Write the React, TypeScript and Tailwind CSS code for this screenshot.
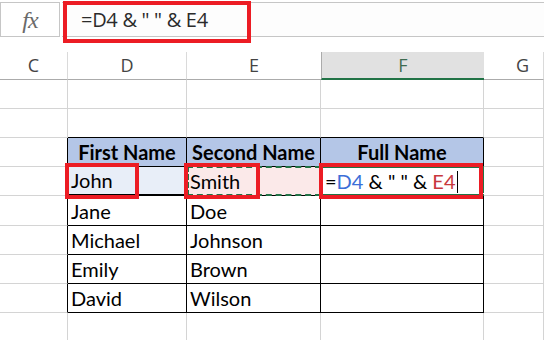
import React from "react";

const cols = [
  { id: "C", w: 68 },
  { id: "D", w: 119 },
  { id: "E", w: 134 },
  { id: "F", w: 163 },
  { id: "G", w: 60 },
];

// row index 0..8 ; table covers rows 2..7, cols 1..3
const rowHeights = [29, 29, 29, 29, 30, 29, 29, 29, 29];

const data: (string | null)[][] = [
  [null, null, null],
  [null, null, null],
  ["First Name", "Second Name", "Full Name"],
  ["John", "Smith", null],
  ["Jane", "Doe", null],
  ["Michael", "Johnson", null],
  ["Emily", "Brown", null],
  ["David", "Wilson", null],
  [null, null, null],
];

const inTable = (r: number) => r >= 2 && r <= 7;

const Cell: React.FC<{ r: number; c: number }> = ({ r, c }) => {
  const tableCol = c >= 1 && c <= 3;
  const rightBlack = inTable(r) && c <= 3;
  const bottomBlack = tableCol && r >= 1 && r <= 7;
  const header = r === 2 && tableCol;
  const value = tableCol ? data[r][c - 1] : null;

  let bg = "bg-white";
  if (header) bg = "bg-[#b4c6e7]";
  else if (r === 3 && c === 1) bg = "bg-[#e8eef8]";
  else if (r === 3 && c === 2) bg = "bg-[#fbe9e9]";

  return (
    <div
      className={`relative flex items-end border-r border-b ${bg} ${
        rightBlack ? "border-r-black" : "border-r-[#d4d4d4]"
      } ${bottomBlack ? "border-b-black" : "border-b-[#d4d4d4]"} ${
        header ? "justify-center font-bold" : "pl-[3px]"
      } ${r === 3 && c === 1 ? "border-b-[#4472c4] border-b-2" : ""}`}
      style={{ width: cols[c].w, height: rowHeights[r] }}
    >
      {value && <span className="leading-none pb-[4px]">{value}</span>}
      {r === 3 && c === 2 && (
        <div className="absolute left-0 right-[-1px] top-[-1px] bottom-[-1px] border-2 border-dashed border-[#217346]" />
      )}
      {r === 3 && c === 3 && (
        <>
          <div className="absolute left-[-1px] right-[-1px] top-[-1px] bottom-[-1px] border-2 border-[#217346]" />
          <div className="absolute right-[-4px] bottom-[-4px] w-[6px] h-[6px] bg-[#217346] border border-white" />
          <span className="leading-none pb-[4px] pl-[1px] flex items-end">
            <span className="text-black">=</span>
            <span className="text-[#3c6fd8]">D4</span>
            <span className="text-black whitespace-pre"> &amp; " " &amp; </span>
            <span className="text-[#c8383d]">E4</span>
            <span className="inline-block w-[1px] h-[22px] bg-black ml-[2px] mb-[-2px]" />
          </span>
        </>
      )}
    </div>
  );
};

const RedBox: React.FC<{ className: string }> = ({ className }) => (
  <div className={`absolute border-[4px] border-[#ec1c24] pointer-events-none ${className}`} />
);

export default function App() {
  return (
    <div
      className="relative w-[544px] h-[340px] overflow-hidden bg-white text-[20px] text-black"
      style={{ fontFamily: "Lato, 'Liberation Sans', sans-serif" }}
    >
      {/* Formula bar */}
      <div className="flex h-[37px] pt-[2px] gap-[2px]">
        <div className="w-[60px] border border-[#c6c6c6] bg-white flex items-center justify-center">
          <span
            className="italic text-[24px] text-[#6a6a6a] tracking-[-1px]"
            style={{ fontFamily: "'Liberation Serif', serif" }}
          >
            fx
          </span>
        </div>
        <div
          className="flex-1 border-y border-[#c6c6c6] bg-[#fdfdfd] flex items-center pl-[19px] text-[20px] text-[#2b2b2b]"
          style={{ fontFamily: "'Open Sans', sans-serif" }}
        >
          <span className="whitespace-pre tracking-[-0.3px]">=D4 &amp; " " &amp; E4</span>
        </div>
      </div>

      {/* Column headers */}
      <div className="flex mt-[15px] h-[28px]">
        {cols.map((col) => (
          <div
            key={col.id}
            className={`flex items-center justify-center border-b text-[18px] ${
              col.id === "F"
                ? "bg-[#e1e1e1] border-l border-l-[#ababab] border-b-2 border-b-[#217346] text-[#3d6b50]"
                : "border-r border-r-[#dadada] border-b-[#ababab] text-[#444444]"
            } ${col.id === "E" ? "border-r-0" : ""}`}
            style={{ width: col.w, fontFamily: "'Open Sans', sans-serif" }}
          >
            <span className={col.id === "G" ? "pl-[18px]" : ""}>{col.id}</span>
          </div>
        ))}
      </div>

      {/* Grid */}
      <div className="flex flex-col">
        {rowHeights.map((_, r) => (
          <div key={r} className="flex">
            {cols.map((_, c) => (
              <Cell key={c} r={r} c={c} />
            ))}
          </div>
        ))}
      </div>

      {/* Annotation boxes */}
      <RedBox className="left-[63px] top-[1px] w-[188px] h-[42px]" />
      <RedBox className="left-[65px] top-[163px] w-[74px] h-[36px]" />
      <RedBox className="left-[184px] top-[163px] w-[76px] h-[36px]" />
      <RedBox className="left-[319px] top-[163px] w-[164px] h-[36px]" />
    </div>
  );
}
